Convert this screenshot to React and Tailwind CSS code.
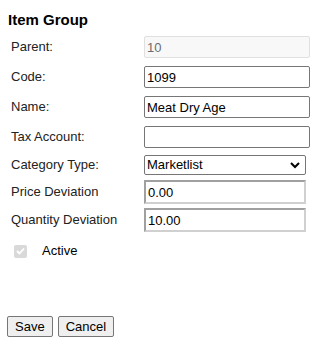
import React from 'react';

const inputCls = 'w-[166px] h-[22px] px-[2px] border border-[#767676] rounded-[2px] text-[13px] text-black bg-white outline-none';

function Row({ label, children, h = 'h-[30px]' }) {
  return (
    <div className={`flex items-center ${h}`}>
      <div className="w-[133px] text-[13px] text-[#222]">{label}</div>
      {children}
    </div>
  );
}

export default function App() {
  return (
    <div className="w-[333px] h-[349px] bg-white px-[8px] pt-[10px] font-['Liberation_Sans',Arial,sans-serif] text-black">
      <h2 className="text-[15px] font-bold leading-[20px]">Item Group</h2>
      <div className="pl-[3px] pt-[2px]">
        <Row label="Parent:">
          <input
            className="w-[166px] h-[22px] px-[2px] border border-[#e0e0e0] rounded-[2px] text-[13px] text-[#6d6d6d] bg-[#f8f8f8] outline-none"
            defaultValue="10"
            disabled
          />
        </Row>
        <Row label="Code:">
          <input className={inputCls} defaultValue="1099" />
        </Row>
        <Row label="Name:">
          <input className={inputCls} defaultValue="Meat Dry Age" />
        </Row>
        <Row label="Tax Account:">
          <input className={inputCls} defaultValue="" />
        </Row>
        <Row label="Category Type:" h="h-[26px]">
          <div className="relative w-[162px] h-[20px] border border-[#767676] rounded-[2px] bg-white flex items-center px-[2px] text-[13px]">
            <span>Marketlist</span>
            <svg className="absolute right-[5px] top-[6px]" width="10" height="7" viewBox="0 0 10 7">
              <path d="M1 1l4 4 4-4" fill="none" stroke="#000" strokeWidth="2" />
            </svg>
          </div>
        </Row>
        <Row label="Price Deviation" h="h-[28px]">
          <input className="w-[162px] h-[24px] px-[2px] border-2 border-[#d0d0d0] border-t-[#a0a0a0] border-l-[#a0a0a0] text-[13px] outline-none" defaultValue="0.00" />
        </Row>
        <Row label="Quantity Deviation" h="h-[28px]">
          <input className="w-[162px] h-[24px] px-[2px] border-2 border-[#d0d0d0] border-t-[#a0a0a0] border-l-[#a0a0a0] text-[13px] outline-none" defaultValue="10.00" />
        </Row>
        <div className="flex items-center h-[34px] pl-[3px]">
          <span className="w-[13px] h-[13px] rounded-[2px] bg-[#d9d9d9] flex items-center justify-center">
            <svg width="9" height="8" viewBox="0 0 9 8">
              <path d="M1 4l2.5 2.5L8 1.5" fill="none" stroke="#fff" strokeWidth="1.8" />
            </svg>
          </span>
          <span className="ml-[15px] text-[13px]">Active</span>
        </div>
      </div>
      <div className="flex gap-[5px] mt-[48px] -ml-[1px]">
        <button className="h-[21px] px-[7px] border border-[#767676] rounded-[2px] bg-[#efefef] text-[13px]">Save</button>
        <button className="h-[21px] px-[7px] border border-[#767676] rounded-[2px] bg-[#efefef] text-[13px]">Cancel</button>
      </div>
    </div>
  );
}
